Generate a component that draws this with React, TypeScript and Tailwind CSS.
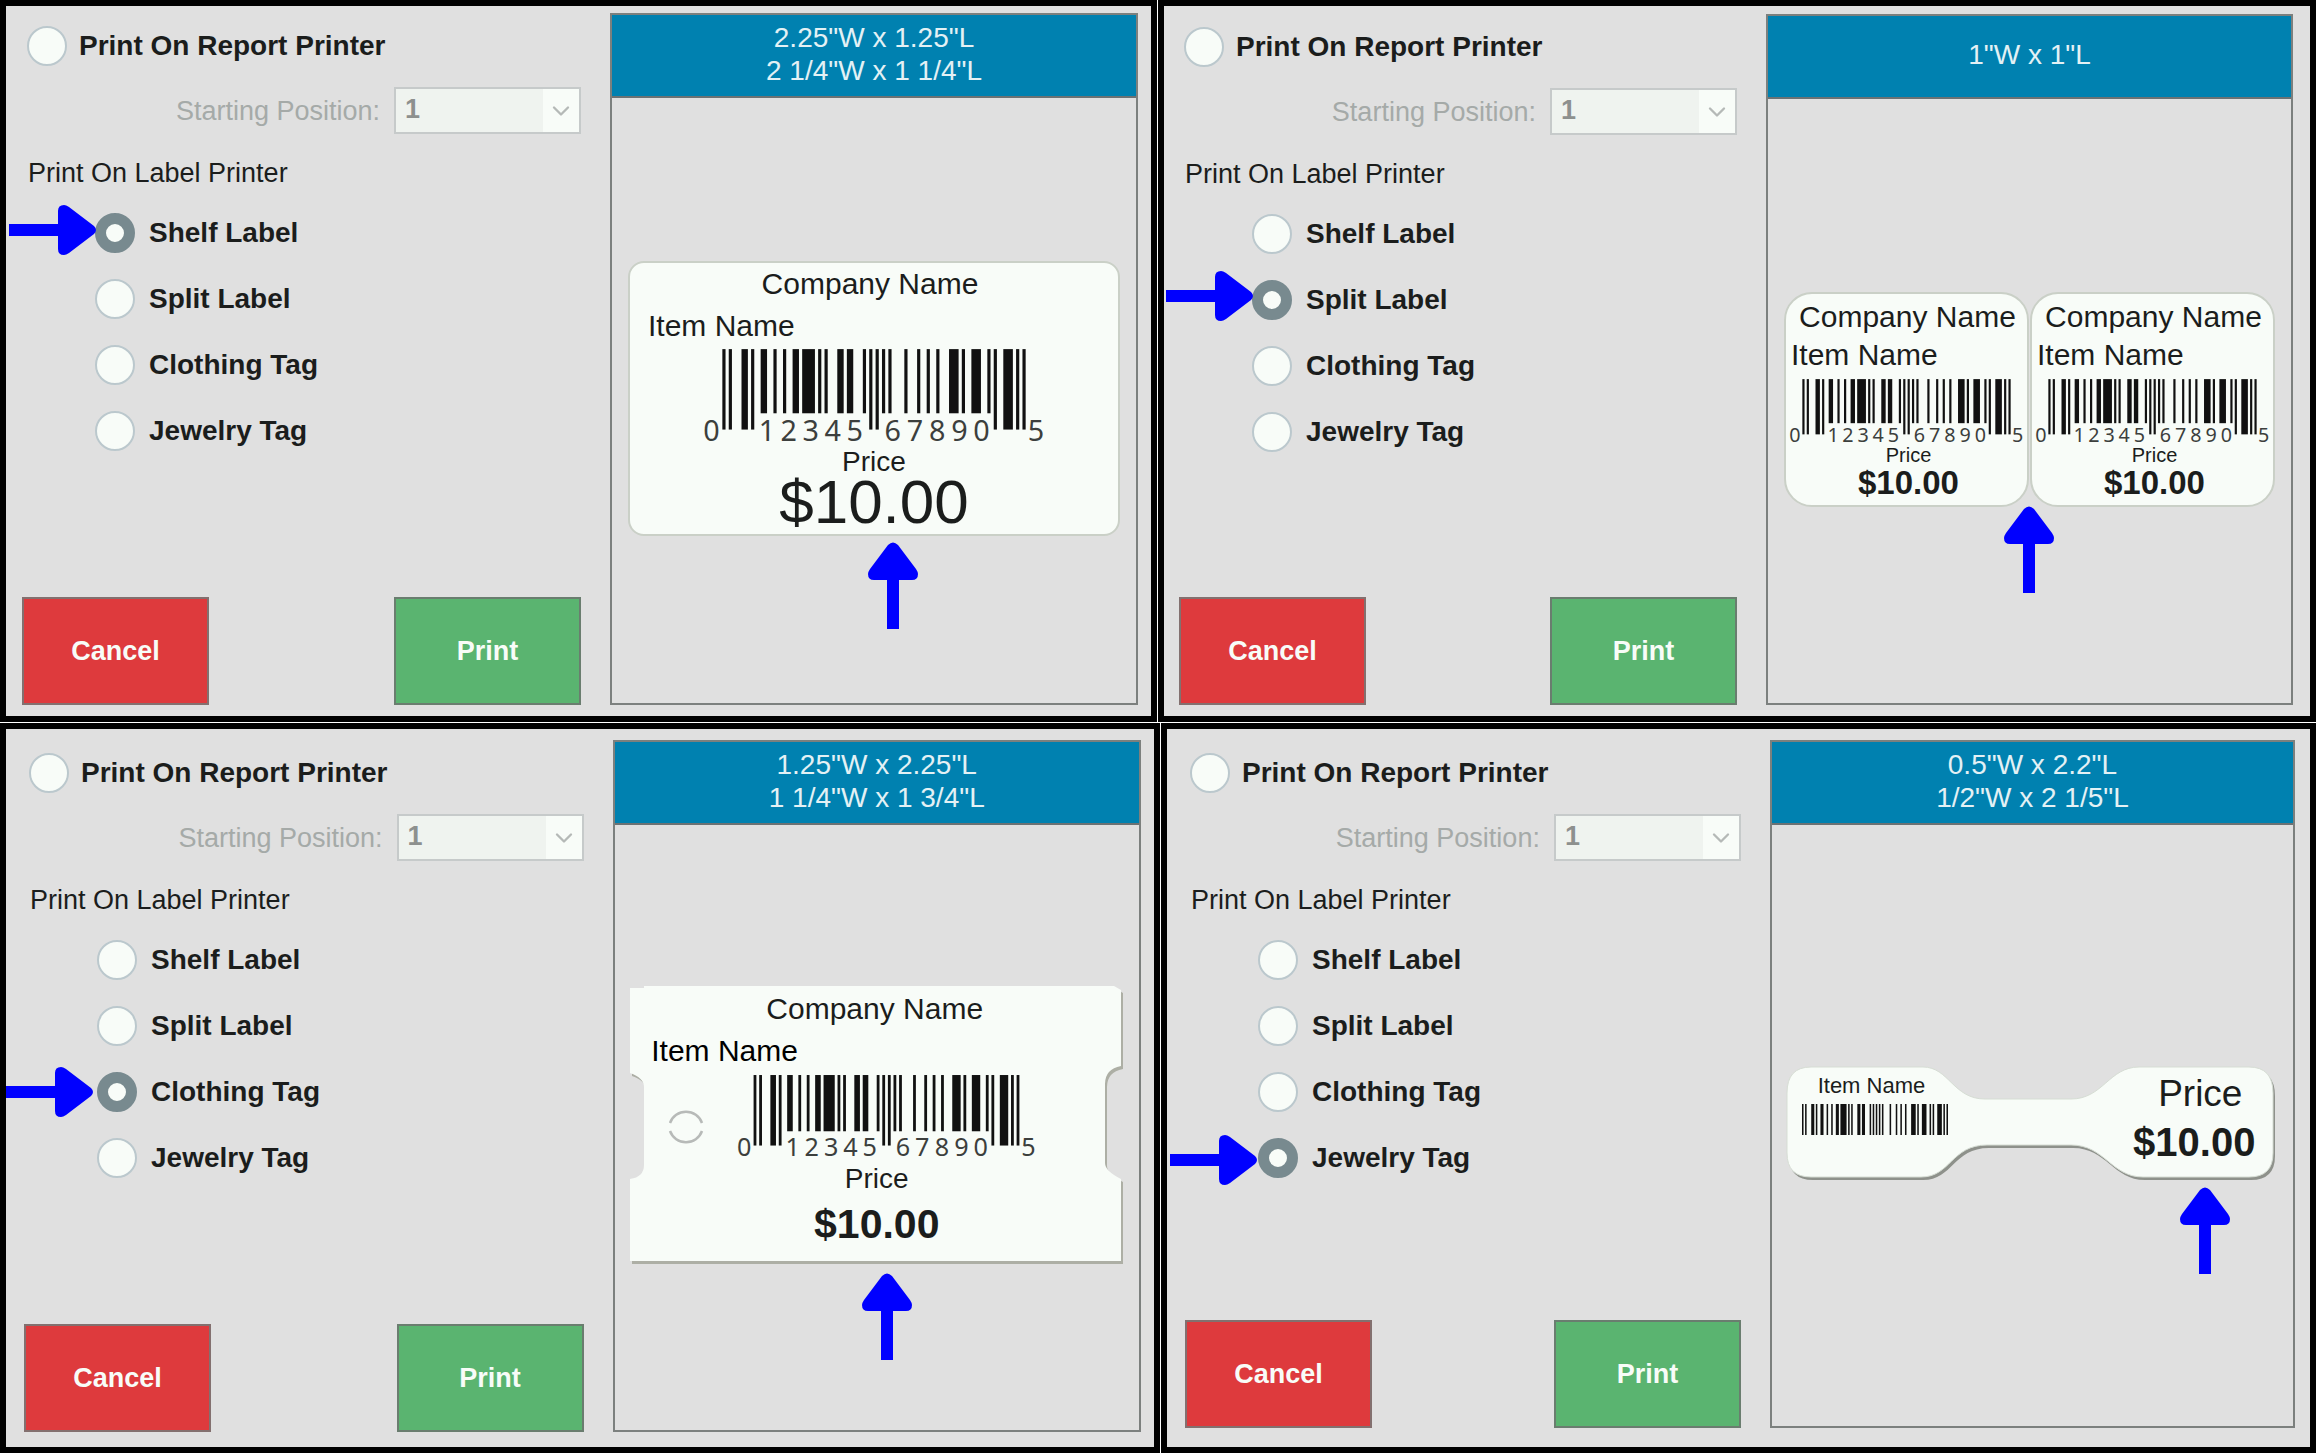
import type { ReactNode } from 'react';
import { ChevronDown } from 'lucide-react';

type LabelType = 'Shelf Label' | 'Split Label' | 'Clothing Tag' | 'Jewelry Tag';

const labelTypes: LabelType[] = ['Shelf Label', 'Split Label', 'Clothing Tag', 'Jewelry Tag'];

// UPC-A encoding of 0 12345 67890 5
const L_CODES = ['0001101', '0011001', '0010011', '0111101', '0100011', '0110001', '0101111', '0111011', '0110111', '0001011'];
const UPC = '012345678905';

const buildBars = () => {
  const left = UPC.slice(0, 6).split('').map((d) => L_CODES[Number(d)]).join('');
  const right = UPC.slice(6).split('').map((d) => L_CODES[Number(d)].replace(/./g, (b) => (b === '1' ? '0' : '1'))).join('');
  const bits = `101${left}01010${right}101`;
  const bars: { x: number; w: number; long: boolean }[] = [];
  let i = 0;
  while (i < bits.length) {
    if (bits[i] === '0') {
      i++;
      continue;
    }
    let w = 1;
    while (bits[i + w] === '1') w++;
    bars.push({ x: i, w, long: i < 10 || i >= 85 || (i > 44 && i < 50) });
    i += w;
  }
  return bars;
};

const bars = buildBars();
const digitCenters = [-3.4, 14, 20.8, 27.7, 34.6, 41.5, 53.4, 60.3, 67.3, 74.3, 81.2, 98.2];

function Barcode({ className }: { className: string }) {
  return (
    <svg viewBox="-7 0 109 30" className={`overflow-visible ${className}`} role="img" aria-label={UPC}>
      {bars.map((bar) => (
        <rect key={bar.x} x={bar.x} y="0" width={bar.w} height={bar.long ? 25.2 : 20.1} fill="#111" />
      ))}
      {digitCenters.map((x, idx) => (
        <text key={x} x={x} y="28.9" textAnchor="middle" fontSize="9" fill="#3c3f3d" fontFamily='"Noto Sans", sans-serif'>
          {UPC[idx]}
        </text>
      ))}
    </svg>
  );
}

function Arrow({ direction, className }: { direction: 'right' | 'up'; className: string }) {
  if (direction === 'right') {
    return (
      <svg viewBox="0 0 87 50" className={`absolute z-10 h-[50px] w-[87px] max-w-none pointer-events-none ${className}`} aria-hidden="true">
        <path d="M0 19H49V6Q49 0 55 0Q57 0 60 2L85 21Q89 25 85 29L60 48Q57 50 55 50Q49 50 49 44V31H0Z" fill="#0000ff" />
      </svg>
    );
  }
  return (
    <svg viewBox="0 0 50 87" className={`absolute z-10 h-[87px] w-[50px] max-w-none pointer-events-none ${className}`} aria-hidden="true">
      <path d="M19 87V38H6Q0 38 0 32Q0 30 2 27L20 3Q25 -2 30 3L48 27Q50 30 50 32Q50 38 44 38H31V87Z" fill="#0000ff" />
    </svg>
  );
}

function ShelfPreview() {
  return (
    <div className="relative w-[492px] h-[275px] pt-[2px] rounded-2xl border-2 border-[#cad0c7] bg-[#f8fcf8] flex flex-col">
      <p className="text-[30px] leading-[38px] text-center pr-2">Company Name</p>
      <p className="text-[30px] leading-[38px] mt-1 pl-[18px]">Item Name</p>
      <Barcode className="w-[348px] h-24 mt-1 self-center" />
      <p className="text-[28px] leading-[26px] mt-1 text-center">Price</p>
      <p className="text-[62px] leading-[54px] text-center">$10.00</p>
      <Arrow direction="up" className="top-full left-[238px] mt-2" />
    </div>
  );
}

function SplitPreview() {
  return (
    <div className="relative w-[491px] flex gap-px">
      {['left', 'right'].map((side) => (
        <div key={side} className="flex-1 h-[215px] pt-1 rounded-[28px] border-2 border-[#cad0c7] bg-[#f8fcf8] flex flex-col">
          <p className="text-[30px] leading-[38px] text-center whitespace-nowrap pl-[2px]">Company Name</p>
          <p className="text-[30px] leading-[38px] pl-[5px]">Item Name</p>
          <Barcode className="w-[239px] h-[66px] mt-[5px] self-center" />
          <p className="text-xl leading-5 text-center pl-1">Price</p>
          <p className="text-[33px] leading-9 text-center font-bold pl-1">$10.00</p>
        </div>
      ))}
      <Arrow direction="up" className="top-full left-[220px] -mt-px" />
    </div>
  );
}

function ClothingPreview() {
  const outline =
    'M0 2H14V0H484L491 4V80Q475 83 475 98V177Q475 185 491 193V275H0V193Q14 191 14 179V101Q14 92 0 87Z';
  return (
    <div className="relative w-[493px] h-[279px]">
      <svg viewBox="0 0 493 279" className="absolute inset-0 w-full h-full overflow-visible" aria-hidden="true">
        <path d={outline} fill="#adafa5" transform="translate(2 3)" />
        <path d={outline} fill="#f8fcf8" />
        <path d="M40 137A17 17 0 0 1 72 137M40 145A17 17 0 0 0 72 145" fill="none" stroke="#b7bab8" strokeWidth="2.5" />
      </svg>
      <div className="relative flex flex-col pt-1">
        <p className="text-[30px] leading-[38px] text-center pr-1">Company Name</p>
        <p className="text-[30px] leading-[38px] mt-1 pl-[21px] text-black">Item Name</p>
        <Barcode className="w-[305px] h-[84px] mt-[5px] ml-5 self-center" />
        <p className="text-[28px] leading-[38px] mt-px text-center">Price</p>
        <p className="text-[41px] leading-[52px] text-center font-bold">$10.00</p>
      </div>
      <Arrow direction="up" className="top-full left-[232px] mt-2" />
    </div>
  );
}

function JewelryPreview() {
  const outline =
    'M24 2H136C162 2 166 34 198 34H284C316 34 322 2 352 2H462Q486 2 486 28V88Q486 112 462 112H356C324 112 318 80 284 80H200C164 80 164 112 134 112H24Q0 112 0 88V28Q0 2 24 2Z';
  return (
    <div className="relative w-[490px] h-[117px]">
      <svg viewBox="0 0 490 117" className="absolute inset-0 w-full h-full overflow-visible" aria-hidden="true">
        <path d={outline} fill="#8e918b" transform="translate(2 3)" />
        <path d={outline} fill="#f8fcf8" stroke="#d6ddd4" strokeWidth="1" />
      </svg>
      <div className="relative flex justify-between pl-[15px] pr-[22px] pt-[7px]">
        <div className="w-[146px]">
          <p className="text-[22px] leading-7 text-center pr-2">Item Name</p>
          <svg viewBox="0 0 95 20" preserveAspectRatio="none" className="w-full h-[31px] mt-1" role="img" aria-label={UPC}>
            {bars.map((bar) => (
              <rect key={bar.x} x={bar.x} y="0" width={bar.w} height="20" fill="#111" />
            ))}
          </svg>
        </div>
        <div>
          <p className="text-[37px] leading-[44px] text-center pl-3">Price</p>
          <p className="text-[40px] leading-[52px] text-center font-bold">$10.00</p>
        </div>
      </div>
      <Arrow direction="up" className="top-full left-[393px] mt-[5px]" />
    </div>
  );
}

function RadioRow({ id, name, label, checked, className, arrow }: {
  id: string;
  name: string;
  label: string;
  checked?: boolean;
  className: string;
  arrow?: string;
}) {
  return (
    <div className={`relative flex items-center h-10 ${className}`}>
      {arrow && <Arrow direction="right" className={arrow} />}
      <input
        type="radio"
        id={id}
        name={name}
        defaultChecked={checked}
        className="appearance-none size-10 shrink-0 rounded-full border-2 border-[#bbc8cd] bg-[#f8fcf8] checked:border-[11px] checked:border-[#788a8f] cursor-pointer"
      />
      <label htmlFor={id} className="text-[28px] leading-8 font-bold cursor-pointer whitespace-nowrap">
        {label}
      </label>
    </div>
  );
}

interface PanelProps {
  id: string;
  selected: LabelType;
  sizes: string[];
  className: string;
  arrow: string;
  preview: ReactNode;
}

function PrintPanel({ id, selected, sizes, className, arrow, preview }: PanelProps) {
  return (
    <section className={`grid grid-cols-[559fr_528fr] border-[6px] border-black bg-[#e0e0e0] ${className}`}>
      <form className="flex flex-col" onSubmit={(e) => e.preventDefault()}>
        <RadioRow id={`${id}-report`} name={id} label="Print On Report Printer" className="mt-[13px] ml-[5px] gap-3" />

        <div className="mt-[21px] h-[47px] flex items-center justify-end gap-[14px]">
          <label htmlFor={`${id}-position`} className="text-[27px] leading-8 text-[#a5aaa8]">
            Starting Position:
          </label>
          <div className="relative w-[187px] h-full">
            <select
              id={`${id}-position`}
              disabled
              className="appearance-none w-full h-full pl-[9px] pb-[2px] border-2 border-[#c6caca] bg-[#eff3ef] text-[27px] font-bold text-[#8d908e] opacity-100"
            >
              <option>1</option>
            </select>
            <span className="absolute inset-y-[2px] right-[2px] w-9 bg-[#f8fcf8] flex items-center justify-center pointer-events-none">
              <ChevronDown className="w-7 h-7 text-[#b5b9b7]" strokeWidth={2} />
            </span>
          </div>
        </div>

        <h2 className="mt-[23px] ml-[6px] text-[27px] leading-8">Print On Label Printer</h2>

        <div className="mt-6 flex flex-col gap-[26px]">
          {labelTypes.map((type) => (
            <RadioRow
              key={type}
              id={`${id}-${type.replace(' ', '-').toLowerCase()}`}
              name={id}
              label={type}
              checked={type === selected}
              className="ml-[73px] gap-[14px]"
              arrow={type === selected ? arrow : undefined}
            />
          ))}
        </div>

        <div className="mt-auto flex justify-between text-[27px] font-bold text-[#f8fcf8]">
          <button type="button" className="w-[187px] h-[108px] border-2 border-[#83706f] bg-[#de3a3d] cursor-pointer">
            Cancel
          </button>
          <button type="submit" className="w-[187px] h-[108px] border-2 border-[#6a7d6f] bg-[#5ab470] cursor-pointer">
            Print
          </button>
        </div>
      </form>

      <div className="flex flex-col border-2 border-[#7c807e]">
        <div className="h-[83px] pb-1 flex flex-col items-center justify-center border-b-2 border-[#6b7274] bg-[#0081b0] text-[28px] leading-[33px] text-[#e3f1f5]">
          {sizes.map((size) => (
            <p key={size}>{size}</p>
          ))}
        </div>
        <div className="flex-1 flex items-center justify-center pb-1">{preview}</div>
      </div>
    </section>
  );
}

export default function App() {
  return (
    <main className="min-h-screen grid grid-rows-[722fr_730fr] gap-px bg-white text-[#1b1d1c] font-['Liberation_Sans',Arial,sans-serif]">
      <div className="grid grid-cols-[1157fr_1158fr] gap-px">
        <PrintPanel
          id="shelf"
          selected="Shelf Label"
          sizes={['2.25"W x 1.25"L', '2 1/4"W x 1 1/4"L']}
          className="pl-4 pr-[13px] pt-[7px] pb-[11px] gap-x-[29px]"
          arrow="left-[-86px] top-[-8px]"
          preview={<ShelfPreview />}
        />
        <PrintPanel
          id="split"
          selected="Split Label"
          sizes={['1"W x 1"L']}
          className="pl-[15px] pr-[17px] pt-2 pb-[11px] gap-x-[29px]"
          arrow="left-[-86px] top-[-9px]"
          preview={<SplitPreview />}
        />
      </div>
      <div className="grid grid-cols-[1160fr_1155fr] gap-px">
        <PrintPanel
          id="clothing"
          selected="Clothing Tag"
          sizes={['1.25"W x 2.25"L', '1 1/4"W x 1 3/4"L']}
          className="pl-[18px] pr-[13px] pt-[11px] pb-[15px] gap-x-[29px]"
          arrow="left-[-91px] top-[-5px]"
          preview={<ClothingPreview />}
        />
        <PrintPanel
          id="jewelry"
          selected="Jewelry Tag"
          sizes={['0.5"W x 2.2"L', '1/2"W x 2 1/5"L']}
          className="pl-[18px] pr-[15px] pt-[11px] pb-[19px] gap-x-[29px]"
          arrow="left-[-88px] top-[-3px]"
          preview={<JewelryPreview />}
        />
      </div>
    </main>
  );
}
